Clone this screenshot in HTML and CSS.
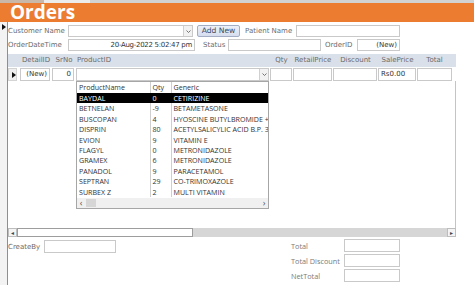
FILE: index.html
```html
<!DOCTYPE html>
<html lang="en">

<head>
    <meta charset="UTF-8">
    <title>Orders</title>
    <link rel="stylesheet" href="styles.css">
</head>

<body>
    <div class="tabs">
        <span class="tab tab1"></span>
        <span class="tab tab2"></span>
    </div>
    <div class="header">
        <h1>Orders</h1>
    </div>

    <div class="form">
        <div class="selector"><span class="tri"></span></div>

        <div class="detail">
            <div class="row r1">
                <label class="lbl w-cust">Customer Name</label>
                <div class="box combo w-custbox">
                    <span class="drop"><svg width="7" height="7" viewBox="0 0 7 7"><path d="M1.5 2.5 L3.5 4.5 L5.5 2.5" fill="none" stroke="#666" stroke-width="0.9"/></svg></span>
                </div>
                <button class="btn">Add New</button>
                <label class="lbl w-patient">Patient Name</label>
                <div class="box w-patientbox"></div>
            </div>

            <div class="row r2">
                <label class="lbl w-cust">OrderDateTime</label>
                <div class="box w-datebox val right date">20-Aug-2022 5:02:47 pm</div>
                <label class="lbl w-status">Status</label>
                <div class="box w-statusbox"></div>
                <label class="lbl w-orderid">OrderID</label>
                <div class="box w-orderbox val right">(New)</div>
            </div>

            <div class="subform">
                <div class="sub-head grid">
                    <span></span>
                    <span>DetailID</span>
                    <span>SrNo</span>
                    <span class="left">ProductID</span>
                    <span>Qty</span>
                    <span>RetailPrice</span>
                    <span>Discount</span>
                    <span>SalePrice</span>
                    <span>Total</span>
                </div>
                <div class="sub-row grid">
                    <div class="cell sel"><span class="tri"></span></div>
                    <div class="cell box val right m2">(New)</div>
                    <div class="cell box val right m2">0</div>
                    <div class="cell box combo">
                        <span class="drop"><svg width="7" height="7" viewBox="0 0 7 7"><path d="M1.5 2.5 L3.5 4.5 L5.5 2.5" fill="none" stroke="#666" stroke-width="0.9"/></svg></span>
                    </div>
                    <div class="cell box"></div>
                    <div class="cell box"></div>
                    <div class="cell box"></div>
                    <div class="cell box val">Rs0.00</div>
                    <div class="cell box last"></div>
                </div>
                <div class="sub-body"></div>
                <div class="hscroll">
                    <span class="sbtn">&#9666;</span>
                    <span class="thumb"></span>
                    <span class="track"></span>
                    <span class="sbtn">&#9656;</span>
                </div>

                <div class="dropdown">
                    <table>
                        <tr class="th">
                            <td class="c1">ProductName</td>
                            <td class="c2">Qty</td>
                            <td class="c3">Generic</td>
                        </tr>
                        <tr class="hi">
                            <td>BAYDAL</td>
                            <td>0</td>
                            <td>CETIRIZINE</td>
                        </tr>
                        <tr>
                            <td>BETNELAN</td>
                            <td>-9</td>
                            <td>BETAMETASONE</td>
                        </tr>
                        <tr>
                            <td>BUSCOPAN</td>
                            <td>4</td>
                            <td>HYOSCINE BUTYLBROMIDE +</td>
                        </tr>
                        <tr>
                            <td>DISPRIN</td>
                            <td>80</td>
                            <td>ACETYLSALICYLIC ACID B.P. 300</td>
                        </tr>
                        <tr>
                            <td>EVION</td>
                            <td>9</td>
                            <td>VITAMIN E</td>
                        </tr>
                        <tr>
                            <td>FLAGYL</td>
                            <td>0</td>
                            <td>METRONIDAZOLE</td>
                        </tr>
                        <tr>
                            <td>GRAMEX</td>
                            <td>6</td>
                            <td>METRONIDAZOLE</td>
                        </tr>
                        <tr>
                            <td>PANADOL</td>
                            <td>9</td>
                            <td>PARACETAMOL</td>
                        </tr>
                        <tr>
                            <td>SEPTRAN</td>
                            <td>29</td>
                            <td>CO-TRIMOXAZOLE</td>
                        </tr>
                        <tr>
                            <td>SURBEX Z</td>
                            <td>2</td>
                            <td>MULTI VITAMIN</td>
                        </tr>
                    </table>
                    <div class="dscroll">
                        <span class="chev">&lsaquo;</span>
                        <span class="dthumb"></span>
                        <span class="dtrack"></span>
                        <span class="chev">&rsaquo;</span>
                    </div>
                </div>
            </div>

            <div class="footer">
                <div class="create">
                    <label class="lbl w-create">CreateBy</label>
                    <div class="box w-createbox"></div>
                </div>
                <div class="totals">
                    <label class="tlbl">Total</label>
                    <div class="box"></div>
                    <label class="tlbl">Total Discount</label>
                    <div class="box"></div>
                    <label class="tlbl">NetTotal</label>
                    <div class="box"></div>
                </div>
            </div>
        </div>
    </div>
</body>

</html>
```

FILE: styles.css
```css
* {
    padding: 0;
    margin: 0;
    box-sizing: border-box;
}
body {
    width: 474px;
    height: 285px;
    overflow: hidden;
    background: #fff;
    font-family: "DejaVu Sans", Verdana, sans-serif;
    font-size: 7px;
    color: #6b6b6b;
}
.tabs {
    height: 3px;
    background: #d2d2d2;
    display: flex;
}
.tab {
    display: block;
    height: 3px;
}
.tab1 {
    width: 44px;
    background: #c9b8a8;
}
.tab2 {
    width: 46px;
    background: #ececec;
}
.header {
    height: 19px;
    background: #ec7c30;
}
.header h1 {
    font-family: "Open Sans", sans-serif;
    font-weight: 700;
    font-size: 19px;
    line-height: 19px;
    color: #fff;
    padding-left: 10px;
}
.form {
    display: flex;
    height: 263px;
}
.selector {
    width: 8px;
    background: #f3f3f3;
    border-right: 1px solid #8f8f8f;
    padding-top: 2px;
    padding-left: 2px;
}
.tri {
    display: block;
    width: 0;
    height: 0;
    border-top: 3px solid transparent;
    border-bottom: 3px solid transparent;
    border-left: 4px solid #111;
}
.detail {
    flex: 1;
    position: relative;
}
.row {
    display: flex;
    align-items: center;
    height: 12px;
}
.r1 {
    margin-top: 3px;
}
.r2 {
    margin-top: 2px;
}
.lbl {
    display: block;
    white-space: nowrap;
    line-height: 12px;
}
.box {
    height: 12px;
    border: 1px solid #c9c9c9;
    background: #fff;
    line-height: 10px;
    color: #333;
    white-space: nowrap;
    overflow: hidden;
}
.val {
    padding: 0 2px;
}
.right {
    text-align: right;
}
.date {
    letter-spacing: -0.3px;
}
.combo {
    display: flex;
    justify-content: flex-end;
}
.drop {
    display: flex;
    align-items: center;
    justify-content: center;
    width: 9px;
    height: 10px;
    background: #f2f2f2;
    border-left: 1px solid #d0d0d0;
}
.w-cust {
    width: 60px;
}
.w-custbox {
    width: 125px;
}
.btn {
    width: 43px;
    height: 12px;
    margin-left: 4px;
    margin-right: 5px;
    border: 1px solid #a3aec4;
    border-radius: 2px;
    background: linear-gradient(#edf1f8, #d5ddee);
    font-family: "DejaVu Sans", Verdana, sans-serif;
    font-size: 7.6px;
    line-height: 10px;
    color: #3e4b62;
}
.w-patient {
    width: 51px;
}
.w-patientbox {
    width: 104px;
}
.w-datebox {
    width: 127px;
}
.w-status {
    width: 25px;
    margin-left: 8px;
}
.w-statusbox {
    width: 93px;
}
.w-orderid {
    width: 32px;
    margin-left: 4px;
}
.w-orderbox {
    width: 43px;
}
.subform {
    position: relative;
    margin-top: 3px;
    width: 448px;
    height: 183px;
    display: flex;
    flex-direction: column;
}
.grid {
    display: grid;
    grid-template-columns: 12px 32px 24px 194px 23px 40px 45px 39px 35px;
}
.sub-head {
    height: 13px;
    background: #dae0e9;
    line-height: 13px;
    text-align: center;
}
.sub-head .left {
    text-align: left;
    padding-left: 1px;
}
.sub-row {
    margin-top: 1px;
    height: 13px;
}
.cell {
    height: 13px;
    margin-right: 1px;
    line-height: 11px;
}
.sel {
    margin-right: 3px;
    background: #efefef;
    border: 1px solid #d4d4d4;
    padding: 3px 0 0 3px;
}
.m2 {
    margin-right: 2px;
}
.last {
    margin-right: 0;
}
.sub-row .drop {
    height: 11px;
}
.sub-body {
    flex: 1;
    border-right: 1px solid #c4c4c4;
}
.hscroll {
    height: 9px;
    display: flex;
    background: #d6d6d6;
}
.sbtn {
    display: block;
    width: 9px;
    height: 9px;
    font-size: 6px;
    line-height: 8px;
    text-align: center;
    color: #444;
    background: #f4f4f4;
    border: 1px solid #bdbdbd;
}
.thumb {
    display: block;
    width: 176px;
    height: 9px;
    background: #fff;
    border: 1px solid #9d9d9d;
}
.track {
    flex: 1;
}
.dropdown {
    position: absolute;
    left: 68px;
    top: 27px;
    width: 193px;
    height: 128px;
    background: #fff;
    border: 1px solid #a6a6a6;
    font-family: "Open Sans", "Liberation Sans", sans-serif;
    font-size: 7.1px;
    color: #333;
}
.dropdown table {
    border-collapse: collapse;
    table-layout: fixed;
    width: 191px;
}
.dropdown td {
    height: 10.4px;
    line-height: 10.4px;
    padding: 0 2px;
    white-space: nowrap;
    overflow: hidden;
}
.dropdown td + td {
    border-left: 1px solid #cfcfcf;
}
.dropdown .th td {
    height: 11px;
    line-height: 11px;
}
.c1 {
    width: 73px;
}
.c2 {
    width: 21px;
}
.dropdown .hi td {
    background: #000;
    color: #fff;
    border-left-color: #000;
}
.dscroll {
    display: flex;
    align-items: center;
    height: 10px;
    margin-top: 1px;
    background: #f0f0f0;
}
.chev {
    display: block;
    width: 8px;
    font-size: 9px;
    line-height: 10px;
    text-align: center;
    color: #555;
}
.dthumb {
    display: block;
    width: 10px;
    height: 8px;
    margin-left: 1px;
    background: #d6d6d6;
}
.dtrack {
    flex: 1;
}
.footer {
    display: flex;
    margin-top: 2px;
}
.create {
    display: flex;
    align-items: center;
    height: 13px;
    margin-top: 1px;
}
.w-create {
    width: 36px;
}
.w-createbox {
    width: 72px;
    height: 13px;
}
.totals {
    margin-left: 175px;
    display: grid;
    grid-template-columns: 53px 56px;
    row-gap: 2px;
    align-items: center;
}
.totals .box {
    height: 13px;
}
.tlbl {
    font-family: "Open Sans", "Liberation Sans", sans-serif;
    font-size: 7.3px;
    color: #7a7a7a;
    white-space: nowrap;
}
```
